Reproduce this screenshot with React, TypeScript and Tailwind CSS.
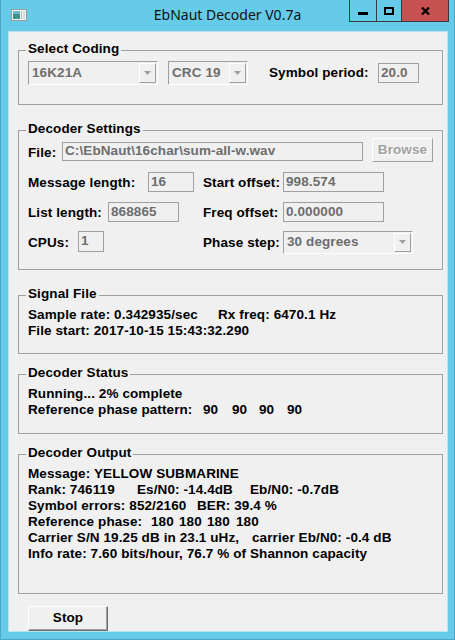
import type { ReactNode } from 'react';

function Field({ value, className }: { value: string; className: string }) {
  return (
    <div
      className={`flex items-center overflow-hidden whitespace-nowrap border border-[#a0a0a0] bg-[#f0f0f0] pl-[2px] text-[#6d6d6d] ${className}`}
    >
      {value}
    </div>
  );
}

function Combo({ value, className }: { value: string; className: string }) {
  return (
    <div
      className={`flex border border-t-[#a0a0a0] border-l-[#a0a0a0] border-r-white border-b-white bg-[#f0f0f0] ${className}`}
    >
      <div className="flex flex-1 items-center pl-[3px] text-[#6d6d6d]">{value}</div>
      <div className="my-px mr-px flex w-[17px] items-center justify-center border border-t-white border-l-white border-r-[#a0a0a0] border-b-[#a0a0a0]">
        <svg width="7" height="4" viewBox="0 0 7 4">
          <path d="M0 0h7L3.5 4z" fill="#a0a0a0" />
        </svg>
      </div>
    </div>
  );
}

function Group({ title, className, children }: { title: string; className: string; children: ReactNode }) {
  return (
    <div className={`relative ml-[9px] w-[425px] border border-[#a0a0a0] ${className}`}>
      <span className="absolute left-[7px] top-[-10px] bg-[#f0f0f0] px-[2px] leading-[16px]">{title}</span>
      {children}
    </div>
  );
}

function TitleBar() {
  return (
    <div className="grid h-[31px] grid-cols-[1fr_auto_1fr]">
      <div className="pl-[10px] pt-[9px]">
        <svg width="16" height="12" viewBox="0 0 16 12">
          <rect x="0.5" y="0.5" width="15" height="11" fill="#f4f4f4" stroke="#9a9a9a" />
          <rect x="2" y="2" width="7" height="8" fill="#3f8f8a" />
          <rect x="2" y="2" width="7" height="3" fill="#6fb7c9" />
          <rect x="10" y="2" width="1" height="8" fill="#b8b8b8" />
          <rect x="12" y="2" width="2" height="8" fill="#d8d8d8" />
        </svg>
      </div>
      <div className="pt-[5px] font-['Noto_Sans',sans-serif] text-[14px] font-normal leading-[20px] tracking-normal text-[#111]">
        EbNaut Decoder V0.7a
      </div>
      <div className="flex justify-end pr-[5px]">
        <div className="flex h-[22px] border-x border-b border-[#3a3a3a]">
          <div className="flex w-[27px] justify-center border-r border-[#3a3a3a] pt-[12px]">
            <div className="h-[3px] w-[10px] bg-black" />
          </div>
          <div className="flex w-[25px] justify-center border-r border-[#3a3a3a] pt-[7px]">
            <div className="h-[8px] w-[10px] border-2 border-black" />
          </div>
          <div className="flex w-[46px] justify-center bg-[#c75050] pt-[7px]">
            <svg width="9" height="8" viewBox="0 0 9 8">
              <path d="M1 0.5l7 7M8 0.5l-7 7" stroke="#000" strokeWidth="2.2" />
            </svg>
          </div>
        </div>
      </div>
    </div>
  );
}

export default function App() {
  return (
    <div className="flex h-[640px] w-[455px] flex-col border-x border-b border-[#4ea6c6] bg-[#65cbe9] font-['Liberation_Sans',Arial,sans-serif] text-[13.5px] font-bold tracking-[0.1px] text-black">
      <TitleBar />
      <div className="ml-[7px] flex h-[601px] w-[440px] flex-col border border-[#b5e4f3] bg-[#f0f0f0]">
        <Group title="Select Coding" className="mt-[18px] h-[55px]">
          <div className="flex items-center pl-[9px] pt-[10px]">
            <Combo value="16K21A" className="h-[24px] w-[130px]" />
            <Combo value="CRC 19" className="ml-[10px] h-[24px] w-[80px]" />
            <span className="ml-[21px] w-[109px] leading-[16px]">Symbol period:</span>
            <Field value="20.0" className="h-[20px] w-[41px]" />
          </div>
        </Group>

        <Group title="Decoder Settings" className="mt-[25px] h-[140px]">
          <div className="flex flex-col pl-[9px] pt-[7px] leading-[16px]">
            <div className="flex h-[30px] items-start">
              <span className="mt-[7px] w-[34px]">File:</span>
              <Field value="C:\EbNaut\16char\sum-all-w.wav" className="mt-[4px] h-[19px] w-[301px]" />
              <div className="ml-[9px] flex h-[24px] w-[61px] items-center justify-center border border-t-white border-l-white border-r-[#a0a0a0] border-b-[#a0a0a0] text-[#a0a0a0] [text-shadow:1px_1px_0_#fff]">
                Browse
              </div>
            </div>
            <div className="flex h-[30px] items-start">
              <span className="mt-[7px] w-[120px]">Message length:</span>
              <Field value="16" className="mt-[4px] h-[20px] w-[46px]" />
              <span className="ml-[9px] mt-[7px] w-[80px]">Start offset:</span>
              <Field value="998.574" className="mt-[4px] h-[20px] w-[101px]" />
            </div>
            <div className="flex h-[30px] items-start">
              <span className="mt-[7px] w-[80px]">List length:</span>
              <Field value="868865" className="mt-[4px] h-[20px] w-[71px]" />
              <span className="ml-[24px] mt-[7px] w-[80px]">Freq offset:</span>
              <Field value="0.000000" className="mt-[4px] h-[20px] w-[101px]" />
            </div>
            <div className="flex h-[30px] items-start">
              <span className="mt-[7px] w-[50px]">CPUs:</span>
              <Field value="1" className="mt-[3px] h-[21px] w-[26px]" />
              <span className="ml-[99px] mt-[7px] w-[80px]">Phase step:</span>
              <Combo value="30 degrees" className="mt-[3px] h-[23px] w-[130px]" />
            </div>
          </div>
        </Group>

        <Group title="Signal File" className="mt-[25px] h-[60px]">
          <div className="whitespace-nowrap pl-[9px] pt-[11px] leading-[16px]">
            <div>
              <span className="inline-block w-[190px]">Sample rate: 0.342935/sec</span>
              Rx freq: 6470.1 Hz
            </div>
            <div>File start: 2017-10-15 15:43:32.290</div>
          </div>
        </Group>

        <Group title="Decoder Status" className="mt-[20px] h-[60px]">
          <div className="whitespace-nowrap pl-[9px] pt-[11px] leading-[16px]">
            <div>Running... 2% complete</div>
            <div>
              <span className="inline-block w-[175px]">Reference phase pattern:</span>
              <span className="inline-block w-[29px]">90</span>
              <span className="inline-block w-[27px]">90</span>
              <span className="inline-block w-[28px]">90</span>
              <span>90</span>
            </div>
          </div>
        </Group>

        <Group title="Decoder Output" className="mt-[20px] h-[140px]">
          <div className="whitespace-nowrap pl-[9px] pt-[11px] leading-[16px]">
            <div>Message: YELLOW SUBMARINE</div>
            <div>
              <span className="inline-block w-[109px]">Rank: 746119</span>
              <span className="inline-block w-[113px]">Es/N0: -14.4dB</span>
              <span>Eb/N0: -0.7dB</span>
            </div>
            <div>
              <span className="inline-block w-[169px]">Symbol errors: 852/2160</span>
              <span>BER: 39.4 %</span>
            </div>
            <div>
              <span className="inline-block w-[123px]">Reference phase:</span>
              <span className="inline-block w-[28px]">180</span>
              <span className="inline-block w-[28px]">180</span>
              <span className="inline-block w-[29px]">180</span>
              <span>180</span>
            </div>
            <div>
              <span className="inline-block w-[224px]">Carrier S/N 19.25 dB in 23.1 uHz,</span>
              <span>carrier Eb/N0: -0.4 dB</span>
            </div>
            <div>Info rate: 7.60 bits/hour, 76.7 % of Shannon capacity</div>
          </div>
        </Group>

        <button className="ml-[19px] mt-[12px] flex h-[25px] w-[80px] items-center justify-center border border-t-white border-l-white border-r-[#6f6f6f] border-b-[#6f6f6f] bg-[#f0f0f0] shadow-[inset_-1px_-1px_0_#a0a0a0]">
          Stop
        </button>
      </div>
    </div>
  );
}
